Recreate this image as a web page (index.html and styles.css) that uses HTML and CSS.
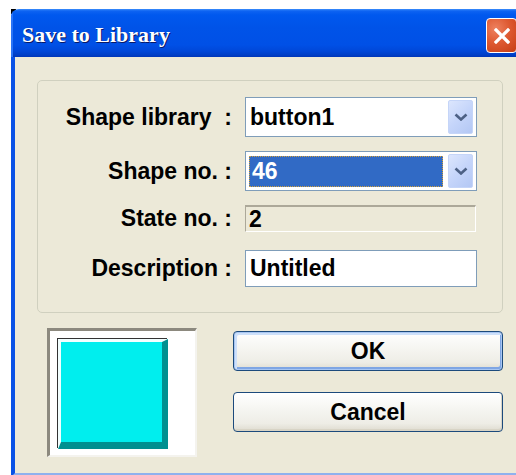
FILE: index.html
```html
<!DOCTYPE html>
<html lang="en">
<head>
<meta charset="utf-8">
<title>Save to Library</title>
<link rel="stylesheet" href="styles.css">
</head>
<body>
  <div class="window">
    <div class="titlebar">
      <span class="title">Save to Library</span>
      <button class="close" type="button" aria-label="Close">
        <svg width="16" height="16" viewBox="0 0 16 16">
          <path d="M2 2 L14 14 M14 2 L2 14" stroke="#fff" stroke-width="3.2" stroke-linecap="square" fill="none"/>
        </svg>
      </button>
    </div>
    <div class="client">
      <div class="group">
        <span class="label">Shape library  :</span>
        <div class="combo">
          <span class="value">button1</span>
          <span class="drop"><svg width="14" height="8" viewBox="0 0 14 8"><path d="M1.5 1.5 L7 6.5 L12.5 1.5" stroke="#4D6185" stroke-width="2.6" fill="none"/></svg></span>
        </div>

        <span class="label">Shape no. :</span>
        <div class="combo">
          <span class="value selected">46</span>
          <span class="drop"><svg width="14" height="8" viewBox="0 0 14 8"><path d="M1.5 1.5 L7 6.5 L12.5 1.5" stroke="#4D6185" stroke-width="2.6" fill="none"/></svg></span>
        </div>

        <span class="label">State no. :</span>
        <div class="field readonly">2</div>

        <span class="label row-desc">Description :</span>
        <div class="field edit row-desc">Untitled</div>
      </div>

      <div class="bottom">
        <div class="preview">
          <div class="shape"></div>
        </div>
        <div class="actions">
          <button class="btn default" type="button">OK</button>
          <button class="btn" type="button">Cancel</button>
        </div>
      </div>
    </div>
  </div>
</body>
</html>
```

FILE: styles.css
```css
html, body {
  margin: 0;
  padding: 0;
}

body {
  width: 516px;
  height: 475px;
  overflow: hidden;
  background: linear-gradient(#000, #000) 11px 9px / 5px 5px no-repeat, #fff;
  font-family: "Liberation Sans", Arial, sans-serif;
  font-weight: bold;
  font-size: 23px;
  color: #000;
}

/* XP style window frame */
.window {
  margin: 9px 0 0 11px;
  width: 520px;
  border-radius: 8px 8px 0 0;
  overflow: hidden;
}

.titlebar {
  height: 48px;
  display: flex;
  align-items: flex-start;
  padding-left: 11px;
  background: linear-gradient(to bottom,
    #3D8FFB 0, #0E63F2 2px, #0058EE 6px, #0053E8 40%,
    #0050E6 75%, #0047D8 88%, #003FC8 95%, #0036B8 100%);
  box-shadow: inset 2px 0 0 #2A74F6;
}

.title {
  margin-top: 14px;
  font-family: "Liberation Serif", "Times New Roman", serif;
  font-size: 22px;
  line-height: 24px;
  color: #fff;
  text-shadow: 1px 1px 0 #0A1A66;
}

.close {
  margin: 9px 14px 0 auto;
  width: 31px;
  height: 35px;
  padding: 0;
  border: 1px solid #fff;
  border-radius: 4px;
  background: radial-gradient(circle at 30% 30%, #EE8260 0, #DE5A32 45%, #C63D14 100%);
  display: flex;
  align-items: center;
  justify-content: center;
}

.client {
  height: 420px;
  box-sizing: border-box;
  background: #ECE9D8;
  border-left: 4px solid #0A52E6;
  border-bottom: 4px solid #8FB1EE;
  padding: 23px 0 0 22px;
}

/* group box with the four fields */
.group {
  width: 466px;
  height: 233px;
  box-sizing: border-box;
  border: 1px solid #D0D0BF;
  border-radius: 5px;
  padding-top: 16px;
  display: grid;
  grid-template-columns: 194px 232px;
  grid-template-rows: 40px 40px 27px 37px;
  column-gap: 13px;
  row-gap: 14px;
  align-items: center;
}

.label {
  text-align: right;
  white-space: pre;
}

.row-desc {
  margin-top: 7px;
}

.combo {
  height: 40px;
  box-sizing: border-box;
  border: 1px solid #7F9DB9;
  background: #fff;
  display: flex;
  align-items: center;
}

.value {
  padding-left: 4px;
}

.value.selected {
  margin-left: 3px;
  width: 194px;
  height: 31px;
  box-sizing: border-box;
  padding-left: 2px;
  line-height: 29px;
  background: #316AC5;
  color: #fff;
  border: 1px dotted #D4A23C;
}

.drop {
  margin: 0 3px 0 auto;
  width: 25px;
  height: 34px;
  box-sizing: border-box;
  border: 1px solid #C5D5F8;
  border-radius: 2px;
  background: linear-gradient(135deg, #DCE6FD 0, #C5D5FA 50%, #B3C7F4 100%);
  display: flex;
  align-items: center;
  justify-content: center;
}

.field {
  box-sizing: border-box;
  height: 100%;
  display: flex;
  align-items: center;
}

.field.readonly {
  width: 231px;
  padding-left: 3px;
  border-top: 2px solid #ACA899;
  border-left: 1px solid #ACA899;
  border-right: 1px solid #fff;
  border-bottom: 1px solid #fff;
  background: #ECE9D8;
}

.field.edit {
  height: 37px;
  padding-left: 4px;
  border: 1px solid #7F9DB9;
  background: #fff;
}

/* preview + buttons */
.bottom {
  margin-top: 15px;
  display: flex;
  align-items: flex-start;
}

.preview {
  margin-left: 10px;
  width: 150px;
  height: 129px;
  box-sizing: border-box;
  border-style: solid;
  border-width: 3px 2px 2px 3px;
  border-color: #8C897E #F4F3EE #F4F3EE #8C897E;
  background: #fff;
}

.shape {
  margin: 8px 0 0 8px;
  width: 110px;
  height: 110px;
  box-sizing: border-box;
  border-style: solid;
  border-width: 3px 6px 7px 3px;
  border-color: #F2FFFF #009090 #009090 #F2FFFF;
  background: #00EEEE;
  box-shadow: -1px -1px 0 #333;
}

.actions {
  margin-left: 36px;
  padding-top: 3px;
  width: 270px;
  display: flex;
  flex-direction: column;
  gap: 21px;
}

.btn {
  height: 40px;
  padding: 0;
  border: 1px solid #1C4A7C;
  border-radius: 4px;
  background: linear-gradient(to bottom, #FFFFFF 0, #F6F6F2 40%, #EEEDE6 80%, #DEDBCF 100%);
  box-shadow: inset -1px -2px 0 #D8D4C6;
  font-family: "Liberation Sans", Arial, sans-serif;
  font-weight: bold;
  font-size: 23px;
  color: #000;
}

.btn.default {
  border-color: #1C4A7C;
  box-shadow: inset 0 0 0 1px #A8C6F2, inset 2px 2px 0 1px #CDE0FA, inset -1px -2px 0 1px #7FA6E4;
}
```
